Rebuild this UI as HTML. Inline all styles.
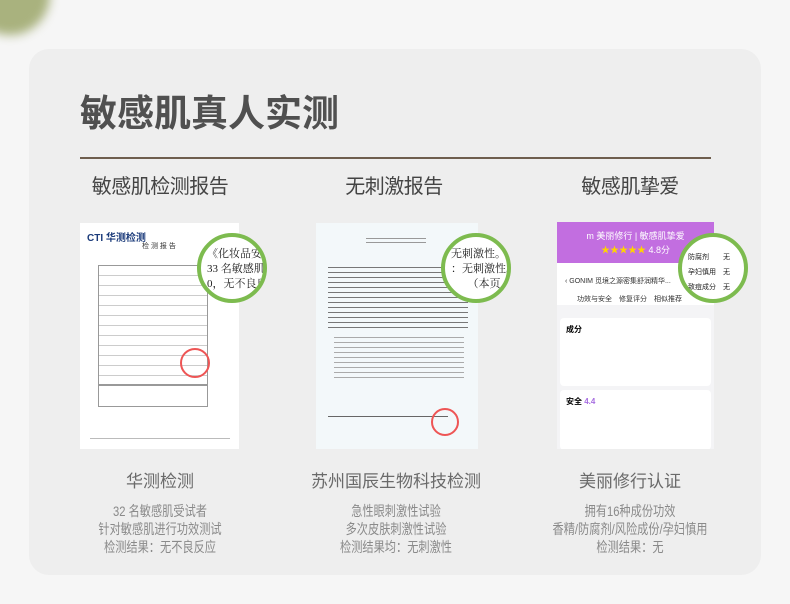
<!DOCTYPE html>
<html><head><meta charset="utf-8"><style>
*{margin:0;padding:0;box-sizing:border-box}
body{width:790px;height:604px;background:#f6f6f6;position:relative;overflow:hidden;font-family:"Liberation Sans","Noto Sans CJK SC",sans-serif}
.blob{position:absolute;left:-30px;top:-45px;width:80px;height:80px;border-radius:50%;background:#a9b27e;filter:blur(5px)}
.card{position:absolute;left:29px;top:49px;width:732px;height:526px;background:#eeeeee;border-radius:20px}
.t{position:absolute;left:80px;top:92px;font-size:37px;font-weight:bold;color:#505050;line-height:44px}
.hr{position:absolute;left:80px;top:157px;width:631px;height:2px;background:#6e5e4e}
.c{position:absolute;text-align:center;white-space:nowrap;transform:translateX(-50%)}
.sub{top:175px;font-size:20px;color:#444;line-height:24px;letter-spacing:-0.5px}
.lab{top:471px;font-size:17px;color:#6a6a6a;line-height:22px}
.d{top:502px;font-size:14px;color:#8a8a8a;line-height:18px;transform:translateX(-50%) scaleX(0.8)}
.img{position:absolute;background:#fff;overflow:hidden}
.ln{position:absolute;height:1px;background:#bbb}
.circ{position:absolute;width:70px;height:70px;border:4px solid #7dbb4f;border-radius:50%;background:#fff;font-family:"Liberation Serif","Noto Serif CJK SC",serif;font-size:11px;color:#222;overflow:hidden;line-height:15px;padding:10px 0 0 6px;white-space:nowrap}
</style></head><body>
<div class="blob"></div>
<div class="card"></div>
<div class="t">敏感肌真人实测</div>
<div class="hr"></div>
<div class="c sub" style="left:160px">敏感肌检测报告</div>
<div class="c sub" style="left:394px">无刺激报告</div>
<div class="c sub" style="left:630px">敏感肌挚爱</div>

<div class="img" style="left:80px;top:223px;width:159px;height:226px">
 <div style="position:absolute;left:7px;top:6px;font-size:10px;font-weight:bold;color:#1a3a7a">CTI 华测检测</div>
 <div style="position:absolute;left:62px;top:18px;font-size:7px;color:#333">检 测 报 告</div>
 <div style="position:absolute;left:18px;top:42px;width:110px;height:120px;border:1px solid #999;background:repeating-linear-gradient(#fff 0 9px,#ccc 9px 10px)"></div>
 <div style="position:absolute;left:18px;top:162px;width:110px;height:22px;border:1px solid #999"></div>
 <div style="position:absolute;left:100px;top:125px;width:30px;height:30px;border:2px solid #e55;border-radius:50%"></div>
 <div class="ln" style="left:10px;top:215px;width:140px"></div>
</div>
<div class="img" style="left:316px;top:223px;width:162px;height:226px;background:#f3f8fa">
 <div style="position:absolute;left:50px;top:12px;width:60px;height:10px;background:repeating-linear-gradient(#f3f8fa 0 3px,#999 3px 4px)"></div>
 <div style="position:absolute;left:12px;top:40px;width:140px;height:65px;background:repeating-linear-gradient(#f3f8fa 0 4px,#777 4px 5px)"></div>
 <div style="position:absolute;left:18px;top:110px;width:130px;height:45px;background:repeating-linear-gradient(#f3f8fa 0 4px,#aaa 4px 5px)"></div>
 <div class="ln" style="left:12px;top:193px;width:120px;background:#666"></div>
 <div style="position:absolute;left:115px;top:185px;width:28px;height:28px;border:2px solid #e55;border-radius:50%"></div>
</div>
<div class="img" style="left:557px;top:222px;width:157px;height:227px;background:#f4f4f6">
 <div style="position:absolute;left:0;top:0;width:157px;height:41px;background:#c26ee0;color:#fff;font-size:9px;text-align:center;padding-top:7px;line-height:14px">m 美丽修行 | 敏感肌挚爱<br><span style="color:#ffd400">★★★★★</span> 4.8分</div>
 <div style="position:absolute;left:0;top:41px;width:157px;height:42px;background:#fff;font-size:7px;color:#333;padding:10px 0 0 8px;line-height:18px">‹ GONIM 觅境之源密集舒润精华...<br><span style="padding-left:12px">功效与安全　修复评分　相似推荐</span></div>
 <div style="position:absolute;left:3px;top:96px;width:151px;height:68px;background:#fff;border-radius:4px;font-size:8px;padding:6px;font-weight:bold">成分</div>
 <div style="position:absolute;left:3px;top:168px;width:151px;height:60px;background:#fff;border-radius:4px;font-size:8px;padding:6px;font-weight:bold">安全 <span style="color:#a66de0">4.4</span></div>
</div>
<div class="circ" style="left:197px;top:233px">《化妆品安<br>33 名敏感肌受<br>0，无不良反应</div>
<div class="circ" style="left:441px;top:233px">无刺激性。<br>：无刺激性。<br>　　（本页</div>
<div class="circ" style="left:678px;top:233px;font-family:'Liberation Sans','Noto Sans CJK SC',sans-serif;font-size:7px;padding-top:13px">防腐剂　　无<br>孕妇慎用　无<br>致痘成分　无</div>

<div class="c lab" style="left:160px">华测检测</div>
<div class="c lab" style="left:396px">苏州国辰生物科技检测</div>
<div class="c lab" style="left:630px">美丽修行认证</div>
<div class="c d" style="left:160px">32 名敏感肌受试者<br>针对敏感肌进行功效测试<br>检测结果：无不良反应</div>
<div class="c d" style="left:396px">急性眼刺激性试验<br>多次皮肤刺激性试验<br>检测结果均：无刺激性</div>
<div class="c d" style="left:630px">拥有16种成份功效<br>香精/防腐剂/风险成份/孕妇慎用<br>检测结果：无</div>
</body></html>
